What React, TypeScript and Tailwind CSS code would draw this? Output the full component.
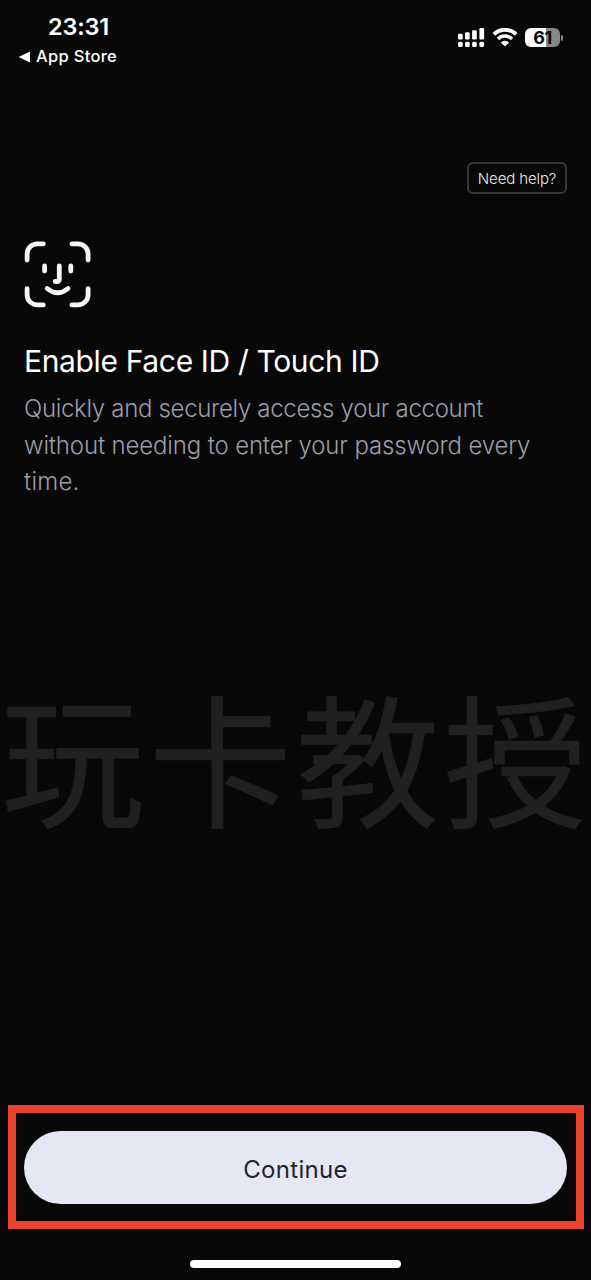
const SignalIcon = () => (
	<svg width="27" height="20" viewBox="0 0 27 20" fill="#fff">
		<rect x="0" y="5.8" width="4.7" height="5.6" rx="1.2" />
		<rect x="7" y="4.2" width="4.7" height="7.2" rx="1.2" />
		<rect x="14.1" y="2.2" width="4.7" height="9.2" rx="1.2" />
		<rect x="21.4" y="0" width="4.7" height="11.4" rx="1.2" />
		<rect x="0" y="13.7" width="4.7" height="5.3" rx="1.6" />
		<rect x="7" y="13.7" width="4.7" height="5.3" rx="1.6" />
		<rect x="14.1" y="13.7" width="4.7" height="5.3" rx="1.6" />
		<rect x="21.4" y="13.7" width="4.7" height="5.3" rx="1.6" />
	</svg>
);

const WifiIcon = () => (
	<svg width="26" height="20" viewBox="0 0 26 20" fill="none">
		<path d="M1.9 6.4a15.6 15.6 0 0 1 22.2 0" stroke="#fff" strokeWidth="3.8" />
		<path d="M6 11a9.8 9.8 0 0 1 14 0" stroke="#fff" strokeWidth="3.5" />
		<path d="M13 18.6l-4.1-4.2a5.7 5.7 0 0 1 8.2 0z" fill="#fff" />
	</svg>
);

const FaceIcon = () => (
	<svg
		width="67"
		height="68"
		viewBox="0 0.5 67 68"
		fill="none"
		stroke="#f5f5fa"
		strokeWidth="4.8"
		strokeLinecap="round"
		strokeLinejoin="round"
	>
		<path d="M19.3 3.3h-6A10.2 10.2 0 0 0 3.1 13.5v6" />
		<path d="M47.9 3.3h6a10.2 10.2 0 0 1 10.2 10.2v6" />
		<path d="M3.1 48.2v6a10.2 10.2 0 0 0 10.2 10.2h6" />
		<path d="M64.1 48.2v6a10.2 10.2 0 0 1-10.2 10.2h-6" />
		<path d="M20.6 25.5v5M46.8 25.5v5" />
		<path d="M35.3 25.5v12.9q0 2.6-2.6 2.6h-1.6" />
		<path d="M23.2 48q10.4 8.6 20.8 0" />
	</svg>
);

const StatusBar = () => {
	return (
		<header className="flex h-[70px] justify-between pr-[28px] pl-[18px] font-['Inter',sans-serif] text-white">
			<div className="pt-3">
				<div className="pl-[30px] text-[23.5px] leading-[30px] font-semibold tracking-[-0.2px]">
					23:31
				</div>
				<div className="flex items-center gap-[6px] text-[16.5px] leading-[29px] font-medium tracking-[0.3px]">
					<svg width="12" height="12" viewBox="0 0 12 12" fill="#fff">
						<path d="M0.6 6L12 0.6v10.8z" />
					</svg>
					App Store
				</div>
			</div>
			<div className="flex items-start pt-[28px]">
				<SignalIcon />
				<div className="ml-[7px]">
					<WifiIcon />
				</div>
				<div className="ml-[7px] flex items-center gap-px">
					<div className="flex h-[19px] w-[35px] items-center justify-center rounded-[6px] bg-linear-to-r from-white from-61% to-[#868686] to-61% text-[18px] leading-none font-bold tracking-[-0.5px] text-[#080808]">
						61
					</div>
					<div className="h-[6px] w-[2px] rounded-r-full bg-[#868686]" />
				</div>
			</div>
		</header>
	);
};

export default function App() {
	return (
		<div className="relative flex h-[1280px] w-[591px] flex-col overflow-hidden bg-[#080808] font-['Inter',sans-serif]">
			<StatusBar />
			<main className="flex flex-1 flex-col px-6 pt-[92px]">
				<button className="flex h-8 w-[100px] items-center justify-center self-end rounded-[6px] border-2 border-[#373737] pt-[2px] text-[15px] font-light tracking-[-0.12px] whitespace-nowrap text-[#ededed]">
					Need help?
				</button>
				<div className="mt-[47px]">
					<FaceIcon />
				</div>
				<h1 className="mt-[33px] text-[30px] leading-[38px] tracking-[-0.35px] whitespace-nowrap text-white">
					Enable Face ID / Touch ID
				</h1>
				<p className="mt-[11px] text-[24px] leading-[36.5px] font-light whitespace-nowrap text-[#9d9dab]">
					<span className="tracking-[-0.32px]">
						Quickly and securely access your account
					</span>
					<br />
					<span className="tracking-[-0.15px]">
						without needing to enter your password every
					</span>
					<br />
					<span className="tracking-[0.25px]">time.</span>
				</p>
			</main>
			<footer className="flex flex-col items-center pr-[7px] pb-3 pl-2">
				<div className="w-full border-8 border-[#eb432b] pt-[18px] pr-[9px] pb-[17px] pl-2">
					<button className="flex h-[73px] w-full items-center justify-center rounded-full bg-[#e5e7f5] pt-[5px] text-[24px] tracking-[0.3px] text-[#22232d]">
						Continue
					</button>
				</div>
				<div className="mt-[31px] mr-px h-2 w-[211px] rounded-full bg-white" />
			</footer>
			<div className="pointer-events-none absolute top-[681px] left-px font-['Noto_Sans_CJK_SC',sans-serif] text-[143.5px] leading-[148px] tracking-[4px] whitespace-nowrap text-[#202020] [-webkit-text-stroke:0.6px_#202020]">
				玩卡教授
			</div>
		</div>
	);
}
